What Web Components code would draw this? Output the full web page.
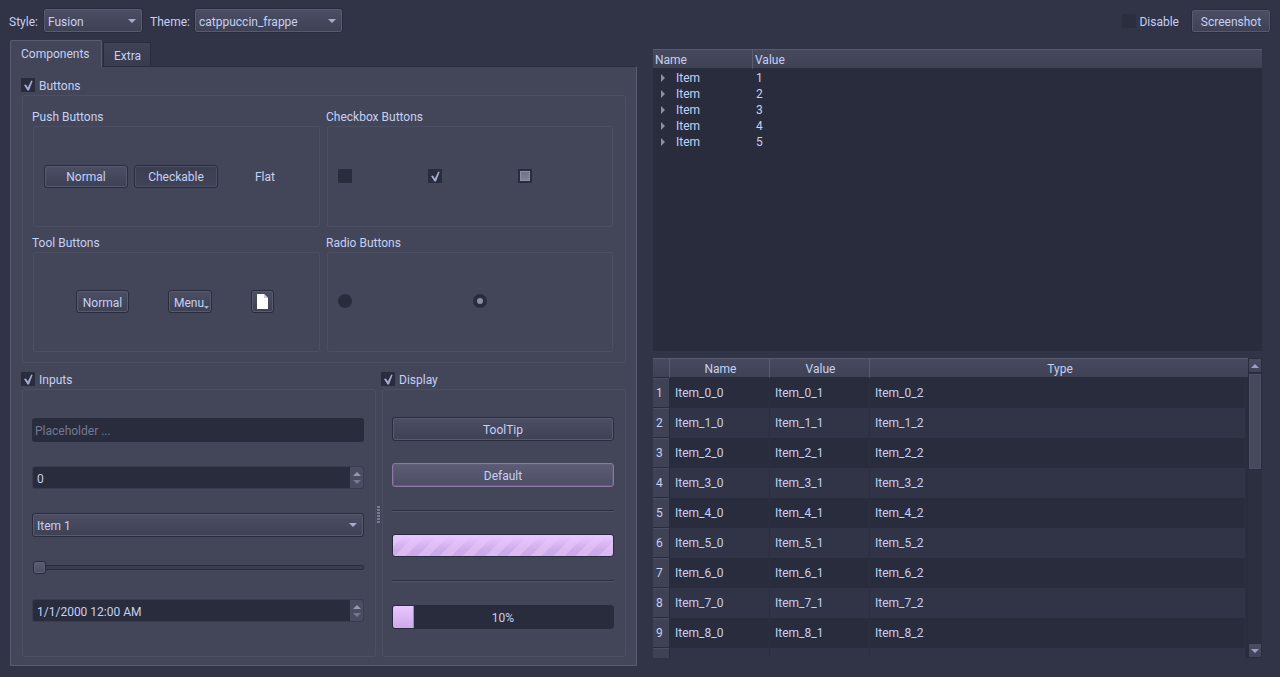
<!DOCTYPE html>
<html>
<head>
<meta charset="utf-8">
<title>Widget gallery</title>
<style>
    html, body { margin: 0; height: 100%; background: #303446; overflow: hidden; }
    body { font: 12px Roboto, "Liberation Sans", sans-serif; color: #c6d0f5; }
</style>
</head>
<body>
<app-window></app-window>

<script>
// colores del tema catppuccin frappe
const BTN = `
    background: linear-gradient(#4c4f64, #3e4154);
    border: 1px solid #292c3c;
    box-shadow: inset 0 0 0 1px #585b70;
    border-radius: 3px;
    box-sizing: border-box;
`;

const tri = (dir, color, w = 8, h = 4) => {
    const pts = dir === 'up' ? `0,${h} ${w},${h} ${w / 2},0` : `0,0 ${w},0 ${w / 2},${h}`;
    return `<svg width="${w}" height="${h}" style="display:block"><polygon points="${pts}" fill="${color}"/></svg>`;
};

class QtButton extends HTMLElement {
    connectedCallback() {
        const w = this.getAttribute('w') || '84';
        const h = this.getAttribute('h') || '23';
        const kind = this.getAttribute('kind') || 'normal';
        const looks = {
            normal: BTN,
            checked: BTN + 'background: linear-gradient(#3b3e50, #414457); box-shadow: inset 0 0 0 1px #4e5165;',
            flat: 'background: none; border: 0;',
            main: BTN + 'background: linear-gradient(#5c5c74, #4d4e65); border: 1px solid #8f76a8; box-shadow: inset 0 0 0 1px #5f5f78;'
        };
        this.attachShadow({ mode: 'open' }).innerHTML = `
        <style>
            :host {
                display: flex; align-items: center; justify-content: center;
                position: relative; flex: none;
                width: ${w === 'full' ? 'auto' : w + 'px'}; height: ${h}px;
                ${looks[kind]}
            }
            .t { margin-top: ${this.hasAttribute('flush') ? 0 : 2}px; }
            .more { position: absolute; right: 2px; bottom: 3px; }
        </style>
        <span class="t"><slot></slot></span>
        ${this.hasAttribute('menu') ? `<span class="more">${tri('down', '#a5adce', 5, 3)}</span>` : ''}
        `;
    }
}

class QtCombo extends HTMLElement {
    connectedCallback() {
        const w = this.getAttribute('w');
        this.attachShadow({ mode: 'open' }).innerHTML = `
        <style>
            :host {
                display: flex; align-items: center; justify-content: space-between;
                ${w ? `width: ${w}px;` : ''} height: ${this.getAttribute('h') || 24}px; padding: 0 6px 0 4px; flex: none;
                ${BTN}
            }
            span { margin-top: 2px; }
        </style>
        <span><slot></slot></span>
        ${tri('down', '#a5adce')}
        `;
    }
}

class QtCheck extends HTMLElement {
    connectedCallback() {
        const state = this.getAttribute('state') || 'off';
        const mark = {
            off: '',
            on: '<svg width="14" height="14"><polygon points="3,7 5,6.5 6.8,9.5 10.3,2.5 11.6,3 8,12.5 6.5,12.5" fill="#a5adce"/></svg>',
            mixed: '<i></i>'
        };
        this.attachShadow({ mode: 'open' }).innerHTML = `
        <style>
            :host { display: inline-flex; align-items: center; gap: 4px; flex: none; }
            .box {
                width: 14px; height: 14px; background: ${this.hasAttribute('faint') ? '#2b2e3f' : '#292c3c'};
                display: block; position: relative;
            }
            .t { margin-top: 2px; }
            svg { display: block; }
            i {
                position: absolute; inset: 2px; box-sizing: border-box;
                background: linear-gradient(#6f7389, #7f8399);
                border: 1px solid #8b8fa6;
            }
        </style>
        <span class="box">${mark[state]}</span><span class="t"><slot></slot></span>
        `;
    }
}

class QtRadio extends HTMLElement {
    connectedCallback() {
        this.attachShadow({ mode: 'open' }).innerHTML = `
        <style>
            :host {
                display: flex; align-items: center; justify-content: center; flex: none;
                width: 14px; height: 14px; border-radius: 50%; background: #292c3c;
            }
            i { width: 6px; height: 6px; border-radius: 50%; background: #8b8fa6; }
        </style>
        ${this.hasAttribute('on') ? '<i></i>' : ''}
        `;
    }
}

// caja con borde tenue; "title" da la etiqueta encima del marco
class QtFrame extends HTMLElement {
    connectedCallback() {
        this.attachShadow({ mode: 'open' }).innerHTML = `
        <style>
            :host { display: block; }
            .label { display: block; height: 14px; line-height: 15px; }
            .box {
                display: flex; align-items: center; box-sizing: border-box;
                margin: 2px 1px 0 1px; height: ${this.getAttribute('h')}px;
                border: 1px solid #4c4f62; border-radius: 2px;
                padding: ${this.getAttribute('pad') || '0'};
                justify-content: ${this.getAttribute('justify') || 'flex-start'};
                gap: ${this.getAttribute('gap') || '0'}px;
            }
        </style>
        <span class="label">${this.getAttribute('title')}</span>
        <div class="box"><slot></slot></div>
        `;
    }
}

class QtGroup extends HTMLElement {
    connectedCallback() {
        this.attachShadow({ mode: 'open' }).innerHTML = `
        <style>
            :host { display: block; }
            .head { display: flex; height: 14px; margin-left: -1px; }
            .box {
                display: block; box-sizing: border-box; margin-top: 3px;
                border: 1px solid #4c4f62; border-radius: 2px;
                height: ${this.getAttribute('h')}px;
                padding: ${this.getAttribute('pad')};
            }
        </style>
        <div class="head"><qt-check state="on">${this.getAttribute('title')}</qt-check></div>
        <div class="box"><slot></slot></div>
        `;
    }
}

class QtSpin extends HTMLElement {
    connectedCallback() {
        this.attachShadow({ mode: 'open' }).innerHTML = `
        <style>
            :host {
                display: flex; align-items: center; height: 23px; box-sizing: border-box;
                background: #292c3c; border: 1px solid #3a3d50; border-radius: 3px;
                padding-left: 4px;
            }
            span { flex: 1; margin-top: 2px; }
            .arrows {
                flex: none; width: 13px; height: 100%; box-sizing: border-box;
                background: #4a4d61; border-radius: 0 2px 2px 0;
                display: flex; flex-direction: column; justify-content: center;
                align-items: center; gap: 4px;
            }
        </style>
        <span><slot></slot></span>
        <div class="arrows">${tri('up', '#9599b0')}${tri('down', '#737994')}</div>
        `;
    }
}

class QtInput extends HTMLElement {
    connectedCallback() {
        this.attachShadow({ mode: 'open' }).innerHTML = `
        <style>
            :host {
                display: flex; align-items: center; height: 24px; box-sizing: border-box;
                background: #292c3c; border-radius: 3px; padding-left: 3px; color: #737994;
            }
            span { margin-top: 2px; }
        </style>
        <span><slot></slot></span>
        `;
    }
}

class QtSlider extends HTMLElement {
    connectedCallback() {
        this.attachShadow({ mode: 'open' }).innerHTML = `
        <style>
            :host { display: flex; align-items: center; height: 13px; position: relative; margin-left: 1px; }
            .groove {
                flex: 1; height: 5px; box-sizing: border-box; background: #3a3d50;
                border: 1px solid #292c3c; border-radius: 2px;
            }
            .handle {
                position: absolute; left: 0; top: 0; width: 13px; height: 13px; box-sizing: border-box;
                ${BTN} background: linear-gradient(#5b5e73, #4c4f64); box-shadow: inset 0 0 0 1px #5f6277;
            }
        </style>
        <div class="groove"></div><div class="handle"></div>
        `;
    }
}

class QtLine extends HTMLElement {
    connectedCallback() {
        this.attachShadow({ mode: 'open' }).innerHTML = `
        <style>
            :host { display: block; height: 2px; background: linear-gradient(#292c3c 50%, #51546a 50%); }
        </style>`;
    }
}

class QtProgress extends HTMLElement {
    connectedCallback() {
        const busy = this.hasAttribute('busy');
        this.attachShadow({ mode: 'open' }).innerHTML = `
        <style>
            :host {
                display: flex; align-items: center; justify-content: center; position: relative;
                height: ${busy ? 23 : 24}px; box-sizing: border-box; overflow: hidden;
                border: 1px solid #292c3c; border-radius: 3px;
                background: ${busy ? `
                    linear-gradient(#e8c6fe 5%, rgba(232,198,254,0) 75%),
                    repeating-linear-gradient(135deg, #dcb9f3 0 8px, #cdaaea 8px 16px)` : '#292c3c'};
            }
            .chunk {
                position: absolute; left: 0; top: 0; bottom: 0; width: 21px; box-sizing: border-box;
                background: linear-gradient(#e8c6fe, #cfa9ea);
                border-right: 1px solid #a583c4;
            }
            span { position: relative; margin-top: 1px; }
        </style>
        ${busy ? '' : '<div class="chunk"></div>'}
        <span><slot></slot></span>
        `;
    }
}

class QtHeaderCell extends HTMLElement {
    connectedCallback() {
        this.attachShadow({ mode: 'open' }).innerHTML = `
        <style>
            :host {
                display: flex; align-items: center; box-sizing: border-box; min-width: 0;
                justify-content: ${this.getAttribute('align') || 'flex-start'};
                background: linear-gradient(#474a5e, #3f4255);
                border-right: 1px solid #5a5d71;
                border-top: 1px solid #585b6f;
                border-bottom: 1px solid #292c3c;
                padding-left: 2px;
            }
            :host([last]) { border-right: 0; }
            span { margin-top: 2px; }
        </style>
        <span><slot></slot></span>
        `;
    }
}

class QtTree extends HTMLElement {
    connectedCallback() {
        const rows = [1, 2, 3, 4, 5].map(n => `
            <div class="row">
                <span class="arrow"><svg width="4" height="8"><polygon points="0,0 4,4 0,8" fill="#8b8fa6"/></svg></span>
                <span class="name">Item</span>
                <span>${n}</span>
            </div>`).join('');
        this.attachShadow({ mode: 'open' }).innerHTML = `
        <style>
            :host { display: block; height: 302px; background: #292c3c; flex: none; }
            .head { display: grid; grid-template-columns: 100px 1fr; height: 20px; }
            .body { padding-top: 1px; }
            .row { display: flex; align-items: center; height: 16px; }
            .arrow { width: 8px; margin-left: 8px; display: flex; margin-top: -1px; }
            .name { width: 80px; margin-left: 7px; }
            svg { display: block; }
        </style>
        <div class="head">
            <qt-header-cell>Name</qt-header-cell>
            <qt-header-cell last>Value</qt-header-cell>
        </div>
        <div class="body">${rows}</div>
        `;
    }
}

class QtScrollbar extends HTMLElement {
    connectedCallback() {
        this.attachShadow({ mode: 'open' }).innerHTML = `
        <style>
            :host {
                display: flex; flex-direction: column; width: 14px; flex: none;
                background: #2c2f40; box-sizing: border-box;
            }
            .step {
                height: 15px; flex: none; background: linear-gradient(#4a4d61, #414458);
                border: 1px solid #292c3c; box-sizing: border-box;
                display: flex; align-items: center; justify-content: center;
            }
            .handle {
                height: 97px; flex: none; background: #46495c; box-sizing: border-box;
                border: 1px solid #292c3c; border-top-color: #2c2f40;
                box-shadow: inset 0 0 0 1px #4d5064;
            }
            .rest { flex: 1; }
        </style>
        <div class="step">${tri('up', '#9aa0c4')}</div>
        <div class="handle"></div>
        <div class="rest"></div>
        <div class="step">${tri('down', '#9aa0c4')}</div>
        `;
    }
}

class QtTable extends HTMLElement {
    connectedCallback() {
        let rows = '';
        for (let i = 0; i < 10; i++) {
            const cells = i < 9 ? [0, 1, 2].map(c => `<span>Item_${i}_${c}</span>`).join('') : '<span></span><span></span><span></span>';
            rows += `<div class="row ${i % 2 ? 'alt' : ''}"><b>${i < 9 ? i + 1 : ''}</b>${cells}</div>`;
        }
        this.attachShadow({ mode: 'open' }).innerHTML = `
        <style>
            :host {
                display: flex; height: 300px; flex: none; overflow: hidden;
                background: #292c3c;
            }
            .main { flex: 1; min-width: 0; display: flex; flex-direction: column; overflow: hidden; }
            .head { display: grid; grid-template-columns: 17px 100px 100px 1fr; height: 20px; flex: none; }
            .row {
                display: grid; grid-template-columns: 17px 100px 100px 1fr; height: 30px; flex: none;
                margin-right: 2px;
            }
            .alt { background: #303446; }
            .row span {
                display: flex; align-items: center; padding-left: 5px;
                border-right: 1px solid #2c2f40;
            }
            .row b {
                font-weight: normal; display: flex; align-items: center; padding-left: 3px;
                background: #3f4255; border-bottom: 1px solid #292c3c; border-right: 1px solid #292c3c;
                box-shadow: inset 0 1px 0 #4b4e62;
            }
        </style>
        <div class="main">
            <div class="head">
                <qt-header-cell></qt-header-cell>
                <qt-header-cell align="center">Name</qt-header-cell>
                <qt-header-cell align="center">Value</qt-header-cell>
                <qt-header-cell align="center" last>Type</qt-header-cell>
            </div>
            ${rows}
        </div>
        <qt-scrollbar></qt-scrollbar>
        `;
    }
}

class QtTabs extends HTMLElement {
    connectedCallback() {
        this.attachShadow({ mode: 'open' }).innerHTML = `
        <style>
            :host { display: block; width: 627px; flex: none; }
            .bar { display: flex; align-items: flex-end; gap: 1px; height: 26px; position: relative; z-index: 1; }
            .tab { display: flex; align-items: center; box-sizing: border-box; border-radius: 2px 2px 0 0; }
            .on {
                width: 92px; height: 27px; margin-bottom: -1px; padding: 0 0 0 10px;
                background: #434658; border: 1px solid #5a5d71; border-bottom: 0;
            }
            .off {
                width: 48px; height: 24px; padding: 2px 0 0 10px;
                background: linear-gradient(#3f4255, #393c4f); border: 1px solid #292c3c; border-bottom: 0;
            }
            .pane {
                box-sizing: border-box; height: 600px; padding: 11px 10px 0 11px;
                background: #434658; border: 1px solid #5a5d71; border-top-color: #292c3c;
            }
        </style>
        <div class="bar">
            <div class="tab on">Components</div>
            <div class="tab off">Extra</div>
        </div>
        <div class="pane"><slot></slot></div>
        `;
    }
}

class AppWindow extends HTMLElement {
    connectedCallback() {
        this.attachShadow({ mode: 'open' }).innerHTML = `
        <style>
            :host { display: block; height: 677px; box-sizing: border-box; padding-top: 9px; }
            .top { display: flex; align-items: center; height: 23px; padding: 0 9px 0 9px; }
            .top .first { width: 34px; margin-top: 2px; }
            .top .second { width: 44px; margin: 2px 0 0 7px; }
            .grow { flex: 1; }
            .main { display: flex; gap: 16px; margin-top: 8px; padding-left: 10px; }
            .right { display: flex; flex-direction: column; gap: 7px; width: 609px; padding-top: 9px; }
            .grid2 { display: grid; grid-template-columns: 289px 288px; column-gap: 5px; row-gap: 9px; }
            .lower { display: flex; margin-top: 9px; }
            .push { display: flex; gap: 6px; align-items: center; margin-top: -1px; }
            .checks { display: flex; width: 100%; margin-top: -1px; }
            .checks qt-check { width: 90px; }
            .radios { display: flex; gap: 121px; margin-top: -3px; }
            .inputs { display: flex; flex-direction: column; gap: 24px; }
            .display { display: flex; flex-direction: column; }
            .splitter {
                width: 3px; height: 18px; margin: 134px 2px 0 1px; align-self: flex-start; flex: none;
                background: repeating-linear-gradient(#777a90 0 2px, transparent 2px 3px);
            }
        </style>
        <div class="top">
            <span class="first">Style:</span>
            <qt-combo w="100" h="25">Fusion</qt-combo>
            <span class="second">Theme:</span>
            <qt-combo w="149" h="25">catppuccin_frappe</qt-combo>
            <span class="grow"></span>
            <qt-check state="off" faint style="gap:3px">Disable</qt-check>
            <qt-button w="80" h="24" style="margin-left:12px">Screenshot</qt-button>
        </div>
        <div class="main">
            <qt-tabs>
                <qt-group title="Buttons" h="268" pad="14px 10px 0 9px">
                    <div class="grid2">
                        <qt-frame title="Push Buttons" h="101" pad="0 0 0 10px">
                            <div class="push">
                                <qt-button>Normal</qt-button>
                                <qt-button kind="checked">Checkable</qt-button>
                                <qt-button kind="flat" w="82">Flat</qt-button>
                            </div>
                        </qt-frame>
                        <qt-frame title="Checkbox Buttons" h="101" pad="0 0 0 10px">
                            <div class="checks">
                                <qt-check></qt-check>
                                <qt-check state="on"></qt-check>
                                <qt-check state="mixed"></qt-check>
                            </div>
                        </qt-frame>
                        <qt-frame title="Tool Buttons" h="100" justify="center" gap="39" pad="0 3px 1px 0">
                            <qt-button w="53">Normal</qt-button>
                            <qt-button w="44" menu><span style="margin-right:2px">Menu</span></qt-button>
                            <qt-button w="23" flush>
                                <svg width="11" height="15" style="display:block">
                                    <path d="M0 0H7L11 4V15H0Z" fill="#fff"/>
                                    <path d="M7 0V4H11Z" fill="#c9cbd6"/>
                                </svg>
                            </qt-button>
                        </qt-frame>
                        <qt-frame title="Radio Buttons" h="100" pad="0 0 0 10px">
                            <div class="radios">
                                <qt-radio></qt-radio>
                                <qt-radio on></qt-radio>
                            </div>
                        </qt-frame>
                    </div>
                </qt-group>
                <div class="lower">
                    <qt-group title="Inputs" style="width:354px;flex:none" h="268" pad="28px 11px 0 9px">
                        <div class="inputs">
                            <qt-input>Placeholder ...</qt-input>
                            <qt-spin>0</qt-spin>
                            <qt-combo>Item 1</qt-combo>
                            <qt-slider></qt-slider>
                            <qt-spin style="margin-top:1px">1/1/2000 12:00 AM</qt-spin>
                        </div>
                    </qt-group>
                    <div class="splitter"></div>
                    <qt-group title="Display" style="flex:1;min-width:0" h="268" pad="27px 11px 0 9px">
                        <div class="display">
                            <qt-button w="full" h="24">ToolTip</qt-button>
                            <qt-button w="full" h="24" kind="main" style="margin-top:22px">Default</qt-button>
                            <qt-line style="margin-top:23px"></qt-line>
                            <qt-progress busy style="margin-top:22px"></qt-progress>
                            <qt-line style="margin-top:23px"></qt-line>
                            <qt-progress style="margin-top:23px">10%</qt-progress>
                        </div>
                    </qt-group>
                </div>
            </qt-tabs>
            <div class="right">
                <qt-tree></qt-tree>
                <qt-table></qt-table>
            </div>
        </div>
        `;
    }
}

customElements.define('qt-button', QtButton);
customElements.define('qt-combo', QtCombo);
customElements.define('qt-check', QtCheck);
customElements.define('qt-radio', QtRadio);
customElements.define('qt-frame', QtFrame);
customElements.define('qt-group', QtGroup);
customElements.define('qt-spin', QtSpin);
customElements.define('qt-input', QtInput);
customElements.define('qt-slider', QtSlider);
customElements.define('qt-line', QtLine);
customElements.define('qt-progress', QtProgress);
customElements.define('qt-header-cell', QtHeaderCell);
customElements.define('qt-tree', QtTree);
customElements.define('qt-scrollbar', QtScrollbar);
customElements.define('qt-table', QtTable);
customElements.define('qt-tabs', QtTabs);
customElements.define('app-window', AppWindow);
</script>
</body>
</html>
